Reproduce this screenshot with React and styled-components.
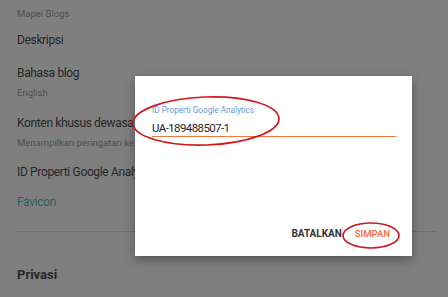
import React from 'react';
import styled, { createGlobalStyle } from 'styled-components';

const GlobalStyle = createGlobalStyle`
  html, body {
    margin: 0;
    padding: 0;
    background: #7f7f7f;
    font-family: Roboto, "Liberation Sans", sans-serif;
  }
`;

const Page = styled.div`
  position: relative;
  width: 448px;
  height: 297px;
  overflow: hidden;
  background: #7f7f7f;
`;

const Settings = styled.div`
  display: flex;
  flex-direction: column;
  padding: 8px 0 0 17px;
`;

const Item = styled.div`
  display: flex;
  flex-direction: column;
  gap: 6px;
  margin-top: ${(p) => p.$mt || 0}px;
`;

const Label = styled.div`
  font-size: 12px;
  line-height: 15px;
  letter-spacing: -0.35px;
  color: ${(p) => p.$color || '#262626'};
  white-space: nowrap;
`;

const Sub = styled.div`
  font-size: 9.5px;
  line-height: 12px;
  color: #4f4f4f;
  white-space: nowrap;
`;

const Divider = styled.div`
  height: 1px;
  width: 420px;
  background: #6f6f6f;
  margin: 21px 0 0;
`;

const Section = styled.div`
  font-size: 13px;
  line-height: 15px;
  font-weight: 700;
  color: #272727;
  margin-top: 35px;
`;

const Dialog = styled.div`
  position: absolute;
  left: 135px;
  top: 76px;
  width: 277px;
  height: 180px;
  background: #fff;
  box-shadow: 0 4px 10px rgba(0, 0, 0, 0.35);
  display: flex;
  flex-direction: column;
  padding: 29px 16px 0 17px;
  box-sizing: border-box;
`;

const Field = styled.div`
  display: flex;
  flex-direction: column;
  width: 244px;
  border-bottom: 1.5px solid #f0773d;
`;

const FieldLabel = styled.div`
  font-size: 8.2px;
  line-height: 10px;
  color: #6a9be0;
  margin-bottom: 5px;
`;

const FieldValue = styled.div`
  font-size: 11.5px;
  line-height: 16px;
  letter-spacing: -0.6px;
  color: #1e1e1e;
`;

const Actions = styled.div`
  margin-top: auto;
  display: flex;
  justify-content: flex-end;
  align-items: center;
  gap: 13px;
  padding: 0 6px 16px 0;
`;

const Button = styled.div`
  font-size: ${(p) => (p.$primary ? 9.5 : 10)}px;
  line-height: 12px;
  font-weight: ${(p) => (p.$primary ? 500 : 700)};
  color: ${(p) => (p.$primary ? '#ef6a3a' : '#333')};
`;

const Marks = styled.svg`
  position: absolute;
  left: 0;
  top: 0;
  pointer-events: none;
`;

export default function App() {
  return (
    <Page>
      <GlobalStyle />
      <Settings>
        <Item>
          <Sub>Mapel Blogs</Sub>
        </Item>
        <Item $mt={13}>
          <Label>Deskripsi</Label>
        </Item>
        <Item $mt={18}>
          <Label>Bahasa blog</Label>
          <Sub>English</Sub>
        </Item>
        <Item $mt={17}>
          <Label>Konten khusus dewasa</Label>
          <Sub>Menampilkan peringatan ke</Sub>
        </Item>
        <Item $mt={16}>
          <Label>ID Properti Google Analytics</Label>
        </Item>
        <Item $mt={15}>
          <Label $color="#2b5e5e">Favicon</Label>
        </Item>
        <Divider />
        <Section>Privasi</Section>
      </Settings>
      <Dialog>
        <Field>
          <FieldLabel>ID Properti Google Analytics</FieldLabel>
          <FieldValue>UA-189488507-1</FieldValue>
        </Field>
        <Actions>
          <Button>BATALKAN</Button>
          <Button $primary>SIMPAN</Button>
        </Actions>
      </Dialog>
      <Marks width="448" height="297">
        <ellipse cx="206" cy="121" rx="73" ry="24" fill="none" stroke="#cc1a1f" strokeWidth="1.7" transform="rotate(-2 206 121)" />
        <ellipse cx="371" cy="235.5" rx="28" ry="12.5" fill="none" stroke="#cc1a1f" strokeWidth="1.7" />
      </Marks>
    </Page>
  );
}
